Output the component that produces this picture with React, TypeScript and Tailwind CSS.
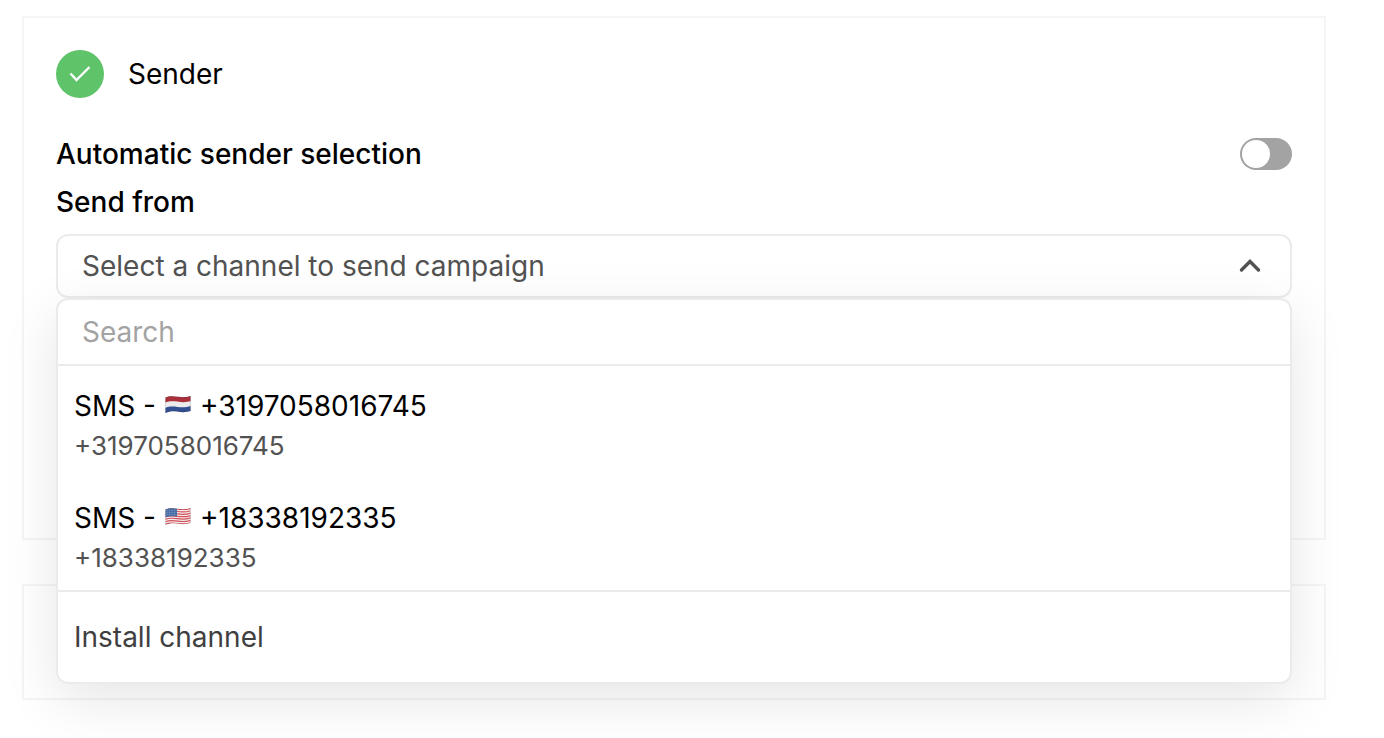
import { useState } from 'react'

const flagShape = 'M0.5 2.400C4 0.800 8 1 12.500 1.700S21 2.500 25.500 1V16C21 17.500 17 17.300 12.500 16.600S4 16.200 0.500 18Z'

function FlagNL() {
  return (
    <svg viewBox="0 0 26 20" className="mb-0.5 h-5 w-[26px]" role="img" aria-label="Netherlands">
      <defs>
        <clipPath id="wave-nl">
          <path d={flagShape} />
        </clipPath>
      </defs>
      <g clipPath="url(#wave-nl)">
        <rect width="26" height="20" fill="#ebebee" />
        <path d="M0 0H26V6C21 7.500 17 7.300 12.500 6.600S4 6 0 7.600Z" fill="#a9303a" />
        <path d="M0 12.900C4 11.200 8 11.200 12.500 11.900S21 12.600 26 11V20H0Z" fill="#324f92" />
        <path d={flagShape} fill="none" stroke="#000" strokeOpacity="0.25" />
      </g>
    </svg>
  )
}

function FlagUS() {
  return (
    <svg viewBox="0 0 26 20" className="mb-0.5 h-5 w-[26px]" role="img" aria-label="United States">
      <defs>
        <clipPath id="wave-us">
          <path d={flagShape} />
        </clipPath>
      </defs>
      <g clipPath="url(#wave-us)">
        <rect width="26" height="20" fill="#f3ecec" />
        <g fill="none" stroke="#d4505a" strokeWidth="1.2">
          {[2.8, 5.2, 7.6, 10, 12.4, 14.8, 17.2].map((y) => (
            <path key={y} d={`M0 ${y}C4 ${y - 1.6} 8 ${y - 1.4} 12.5 ${y - 0.7}S21 ${y} 26 ${y - 1.5}`} />
          ))}
        </g>
        <path d="M0 0H12V9.600C8 9 4 9 0 10.500Z" fill="#4a70a8" />
        <g fill="#c9d6ea" fillOpacity="0.5">
          {[2, 4.5, 7, 9.5].map((x) => (
            <g key={x}>
              <circle cx={x} cy="3.5" r="0.5" />
              <circle cx={x} cy="5.5" r="0.5" />
              <circle cx={x} cy="7.5" r="0.5" />
            </g>
          ))}
        </g>
        <path d={flagShape} fill="none" stroke="#000" strokeOpacity="0.15" />
      </g>
    </svg>
  )
}

const channels = [
  { id: 'nl', number: '+3197058016745', Flag: FlagNL },
  { id: 'us', number: '+18338192335', Flag: FlagUS },
]

function ChannelSelect() {
  const [open, setOpen] = useState(true)

  return (
    <div className="relative">
      <button
        id="channel"
        type="button"
        aria-expanded={open}
        aria-haspopup="listbox"
        onClick={() => setOpen(!open)}
        className="flex h-16 w-full items-center justify-between rounded-xl border-2 border-[#ebebeb] bg-white pr-7 pl-6 text-left text-[#525252]"
      >
        <span className="truncate">Select a channel to send campaign</span>
        <svg viewBox="0 0 24 24" className="size-6 shrink-0" fill="none" stroke="#525252" strokeWidth="3.400" strokeLinecap="round" aria-hidden="true">
          <path d="M3.500 16L12 7.500L20.500 16" />
        </svg>
      </button>

      {open && (
        <div className="absolute inset-x-0 top-full z-10 overflow-hidden rounded-xl border-2 border-[#ebebeb] bg-white shadow-[0_16px_56px_rgba(0,0,0,0.1)]">
          <input
            type="text"
            aria-label="Search"
            placeholder="Search"
            className="block h-[66px] w-full border-b-2 border-[#ebebeb] px-6 outline-none placeholder:text-[#a3a3a3]"
          />
          <ul role="listbox" aria-label="Channels">
            {channels.map(({ id, number, Flag }) => (
              <li key={id} role="option" aria-selected={false} className="cursor-pointer px-4 pt-5 pb-3 leading-10">
                <div className="flex items-center gap-[9px]">
                  <span>SMS -</span>
                  <Flag />
                  <span>{number}</span>
                </div>
                <div className="text-[26px] text-[#525252]">{number}</div>
              </li>
            ))}
          </ul>
          <button type="button" className="block h-[92px] w-full border-t-2 border-[#ebebeb] px-4 text-left text-[#404040]">
            Install channel
          </button>
        </div>
      )}
    </div>
  )
}

export default function App() {
  const [automatic, setAutomatic] = useState(false)

  return (
    <main className="flex flex-col gap-11 bg-white pt-4 pr-[58px] pb-[38px] pl-[22px] font-['Inter',sans-serif] text-[28px] text-black">
      <section className="border-2 border-[#f5f5f5] px-8 pt-8 pb-60">
        <header className="mb-8 flex items-center gap-6">
          <span className="flex size-12 items-center justify-center rounded-full bg-[#5fc36a]">
            <svg viewBox="0 0 24 24" className="size-6" fill="none" stroke="#fff" strokeWidth="2.400" aria-hidden="true">
              <path d="M2.500 11.500L8.500 18L21.500 5" />
            </svg>
          </span>
          <h2 className="leading-12">Sender</h2>
        </header>
        <div className="flex h-12 items-center justify-between font-medium">
          <label htmlFor="automatic">Automatic sender selection</label>
          <input
            id="automatic"
            type="checkbox"
            role="switch"
            checked={automatic}
            onChange={(e) => setAutomatic(e.target.checked)}
            className="flex h-8 w-[52px] cursor-pointer appearance-none items-center rounded-full bg-[#a3a3a3] px-0.5 before:size-7 before:rounded-full before:bg-white checked:justify-end checked:bg-[#5fc36a]"
          />
        </div>
        <label htmlFor="channel" className="mb-2 block leading-12 font-medium">
          Send from
        </label>
        <ChannelSelect />
      </section>
      <section className="h-[116px] border-2 border-[#f5f5f5]" />
    </main>
  )
}
